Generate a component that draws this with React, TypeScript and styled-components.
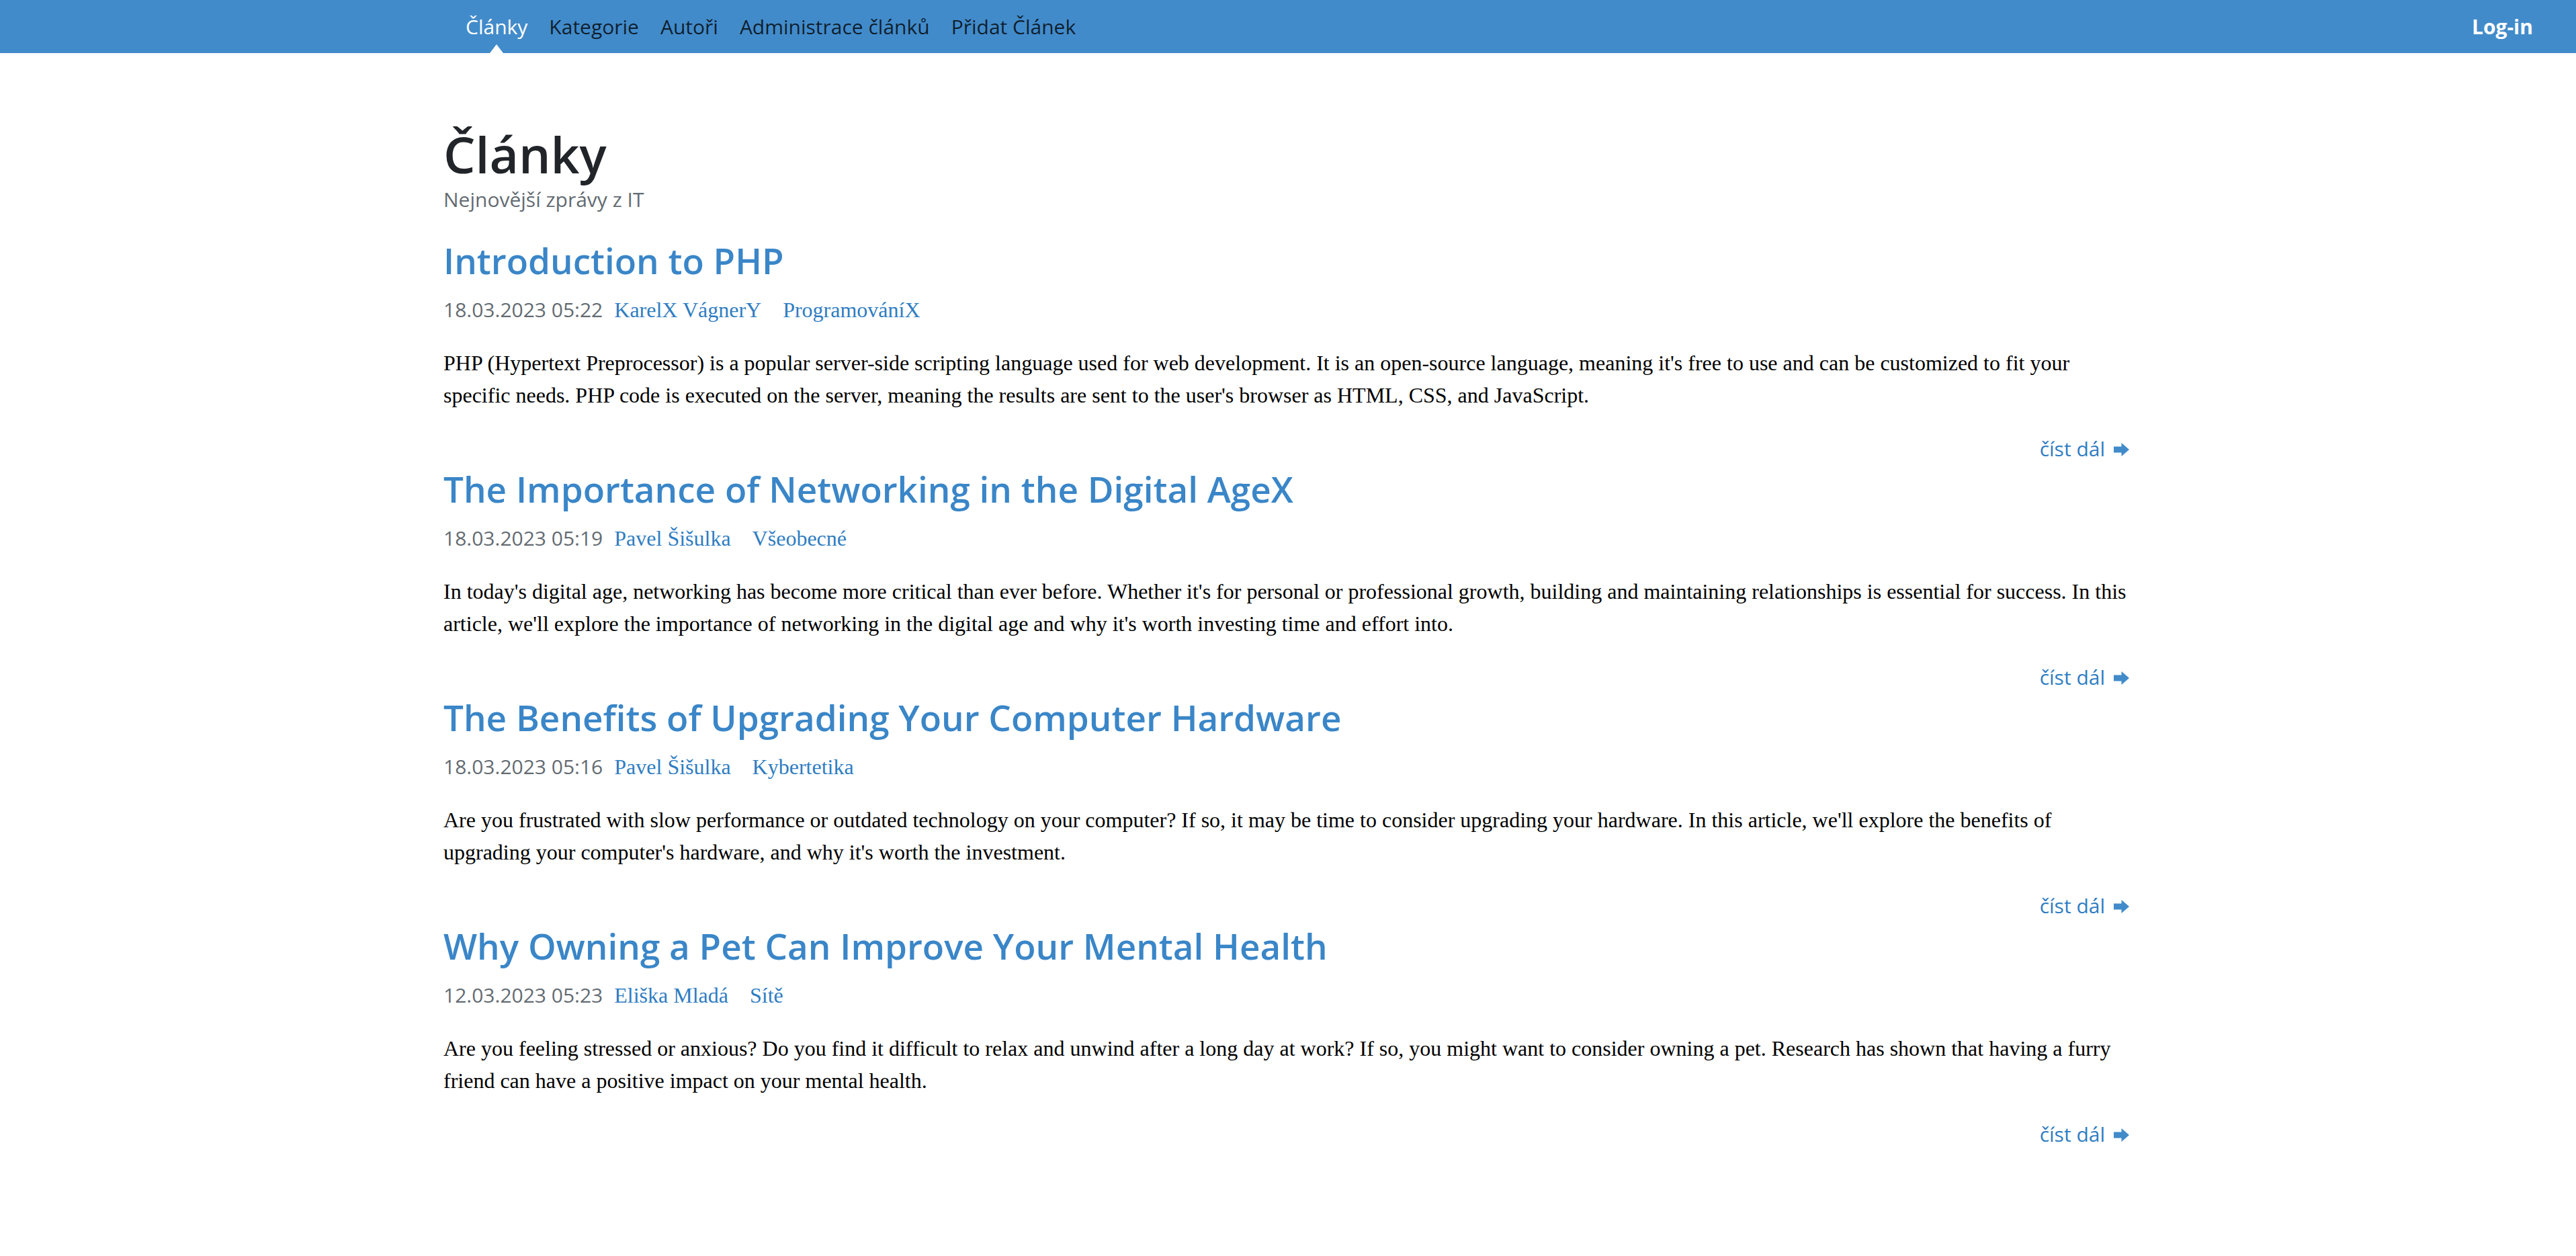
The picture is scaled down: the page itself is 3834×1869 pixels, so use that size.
import React from "react";
import styled, { createGlobalStyle } from "styled-components";

const GlobalStyle = createGlobalStyle`
  html, body { margin: 0; padding: 0; background: #fff; }
  body { font-family: "Liberation Serif", "Times New Roman", serif; }
  * { box-sizing: border-box; }
`;

const SANS = `"Open Sans", "Noto Sans", "DejaVu Sans", sans-serif`;
const SERIF = `"Liberation Serif", "Times New Roman", serif`;

const NavBar = styled.header`
  display: grid;
  grid-template-columns: 1fr minmax(0, 2514px) 1fr;
  height: 79px;
  background: #428bca;
  font-family: ${SANS};
`;

const NavList = styled.nav`
  grid-column: 2;
  display: flex;
  align-items: stretch;
  padding-left: 17px;
`;

const NavLink = styled.a<{ $active?: boolean }>`
  position: relative;
  display: flex;
  align-items: center;
  padding: 0 16px;
  font-size: 30px;
  line-height: 79px;
  color: ${(p) => (p.$active ? "#ffffff" : "rgba(0, 0, 0, 0.78)")};
  text-decoration: none;
  white-space: nowrap;
  ${(p) =>
    p.$active &&
    `
    &::after {
      content: "";
      position: absolute;
      left: 50%;
      bottom: 0;
      transform: translateX(-50%);
      border-left: 10px solid transparent;
      border-right: 10px solid transparent;
      border-bottom: 13px solid #ffffff;
    }
  `}
`;

const LoginArea = styled.div`
  grid-column: 3;
  display: flex;
  justify-content: flex-end;
  align-items: center;
  padding-right: 64px;
`;

const LoginLink = styled.a`
  font-size: 30px;
  font-weight: 700;
  color: #ffffff;
  text-decoration: none;
  line-height: 79px;
`;

const Main = styled.main`
  max-width: 2514px;
  margin: 0 auto;
  padding-top: 104px;
  padding-bottom: 120px;
`;

const PageHeader = styled.div`
  margin-bottom: 36px;
`;

const PageTitle = styled.h1`
  margin: 0;
  font-family: ${SANS};
  font-weight: 600;
  font-size: 75px;
  line-height: 92px;
  color: #212529;
`;

const Subtitle = styled.p`
  margin: 0;
  font-family: ${SANS};
  font-size: 30px;
  line-height: 44px;
  color: #636b72;
`;

const Article = styled.article`
  display: flex;
  flex-direction: column;
  padding-bottom: 3px;
`;

const ArticleTitle = styled.h2`
  margin: 0;
  font-family: ${SANS};
  font-weight: 600;
  font-size: 53px;
  line-height: 66px;
  color: #3a86c8;
`;

const Meta = styled.div`
  display: flex;
  align-items: baseline;
  margin-top: 16px;
  height: 48px;
  line-height: 48px;
`;

const DateText = styled.span`
  font-family: ${SANS};
  font-size: 30px;
  color: #636b72;
`;

const MetaLink = styled.a<{ $gap: number }>`
  font-family: ${SERIF};
  font-size: 32px;
  color: #2f7dc2;
  text-decoration: none;
  margin-left: ${(p) => p.$gap}px;
`;

const Body = styled.p`
  margin: 31px 0 0;
  font-family: ${SERIF};
  font-size: 32px;
  line-height: 48px;
  color: #000;
`;

const ReadMoreRow = styled.div`
  display: flex;
  justify-content: flex-end;
  margin-top: 32px;
`;

const ReadMore = styled.a`
  display: flex;
  align-items: center;
  gap: 13px;
  font-family: ${SANS};
  font-size: 30px;
  line-height: 48px;
  color: #2f7dc2;
  text-decoration: none;
`;

const ArrowIcon = styled.svg`
  flex: none;
  width: 23px;
  height: 20px;
  margin-right: 5px;
  margin-top: 2px;
  fill: #428bca;
`;

const Arrow = () => (
  <ArrowIcon viewBox="0 0 23 20" aria-hidden="true">
    <polygon points="0,5.5 11.5,5.5 11.5,0 23,10 11.5,20 11.5,14.5 0,14.5" />
  </ArrowIcon>
);

type Item = {
  title: string;
  date: string;
  author: string;
  category: string;
  text: string;
};

const articles: Item[] = [
  {
    title: "Introduction to PHP",
    date: "18.03.2023 05:22",
    author: "KarelX VágnerY",
    category: "ProgramováníX",
    text:
      "PHP (Hypertext Preprocessor) is a popular server-side scripting language used for web development. It is an open-source language, meaning it's free to use and can be customized to fit your specific needs. PHP code is executed on the server, meaning the results are sent to the user's browser as HTML, CSS, and JavaScript.",
  },
  {
    title: "The Importance of Networking in the Digital AgeX",
    date: "18.03.2023 05:19",
    author: "Pavel Šišulka",
    category: "Všeobecné",
    text:
      "In today's digital age, networking has become more critical than ever before. Whether it's for personal or professional growth, building and maintaining relationships is essential for success. In this article, we'll explore the importance of networking in the digital age and why it's worth investing time and effort into.",
  },
  {
    title: "The Benefits of Upgrading Your Computer Hardware",
    date: "18.03.2023 05:16",
    author: "Pavel Šišulka",
    category: "Kybertetika",
    text:
      "Are you frustrated with slow performance or outdated technology on your computer? If so, it may be time to consider upgrading your hardware. In this article, we'll explore the benefits of upgrading your computer's hardware, and why it's worth the investment.",
  },
  {
    title: "Why Owning a Pet Can Improve Your Mental Health",
    date: "12.03.2023 05:23",
    author: "Eliška Mladá",
    category: "Sítě",
    text:
      "Are you feeling stressed or anxious? Do you find it difficult to relax and unwind after a long day at work? If so, you might want to consider owning a pet. Research has shown that having a furry friend can have a positive impact on your mental health.",
  },
];

const navItems = ["Články", "Kategorie", "Autoři", "Administrace článků", "Přidat Článek"];

export default function App() {
  return (
    <>
      <GlobalStyle />
      <NavBar>
        <NavList>
          {navItems.map((n, i) => (
            <NavLink key={n} href="#" $active={i === 0}>
              {n}
            </NavLink>
          ))}
        </NavList>
        <LoginArea>
          <LoginLink href="#">Log-in</LoginLink>
        </LoginArea>
      </NavBar>
      <Main>
        <PageHeader>
          <PageTitle>Články</PageTitle>
          <Subtitle>Nejnovější zprávy z IT</Subtitle>
        </PageHeader>
        {articles.map((a) => (
          <Article key={a.title}>
            <ArticleTitle>{a.title}</ArticleTitle>
            <Meta>
              <DateText>{a.date}</DateText>
              <MetaLink href="#" $gap={17}>
                {a.author}
              </MetaLink>
              <MetaLink href="#" $gap={32}>
                {a.category}
              </MetaLink>
            </Meta>
            <Body>{a.text}</Body>
            <ReadMoreRow>
              <ReadMore href="#">
                číst dál
                <Arrow />
              </ReadMore>
            </ReadMoreRow>
          </Article>
        ))}
      </Main>
    </>
  );
}
